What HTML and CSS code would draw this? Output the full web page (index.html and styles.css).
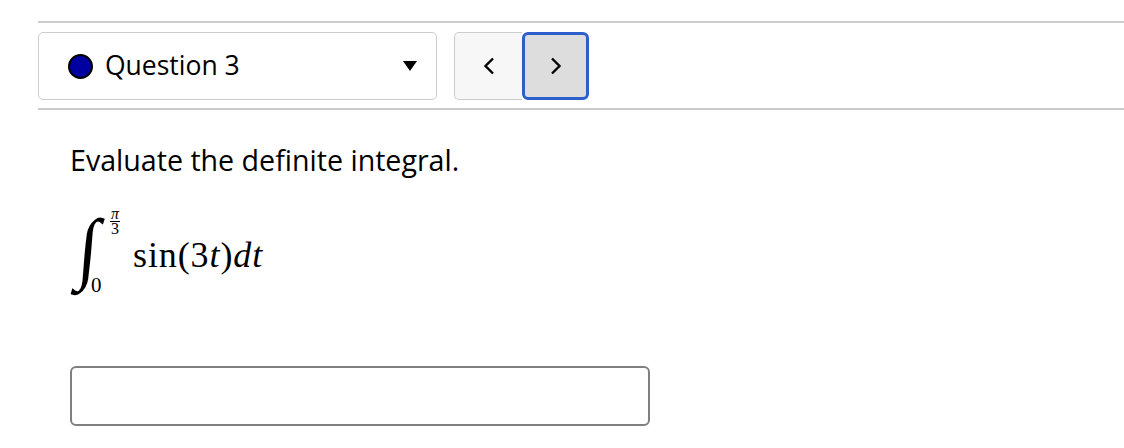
FILE: index.html
```html
<!DOCTYPE html>
<html>
<head>
<meta charset="utf-8">
<link rel="stylesheet" href="styles.css">
</head>
<body>
<div class="page">
  <div class="rule rule-top"></div>
  <div class="nav">
    <div class="select">
      <span class="dot"></span>
      <span class="select-label">Question 3</span>
      <svg class="caret" width="14" height="10" viewBox="0 0 14 10"><polygon points="0,0 14,0 7,10" fill="#000"/></svg>
    </div>
    <div class="pager">
      <button class="btn btn-prev" type="button">
        <svg width="12" height="18" viewBox="0 0 12 18"><polyline points="10,1.5 2.5,9 10,16.5" fill="none" stroke="#000" stroke-width="2.4"/></svg>
      </button>
      <button class="btn btn-next" type="button">
        <svg width="12" height="18" viewBox="0 0 12 18"><polyline points="2,1.5 9.5,9 2,16.5" fill="none" stroke="#000" stroke-width="2.4"/></svg>
      </button>
    </div>
  </div>
  <div class="rule rule-bottom"></div>
  <div class="question">
    <p class="prompt">Evaluate the definite integral.</p>
    <div class="math">
      <span class="int">∫</span>
      <span class="limits">
        <span class="upper"><span class="frac"><span class="num">π</span><span class="den">3</span></span></span>
        <span class="lower">0</span>
      </span>
      <span class="integrand">sin(3<i>t</i>)<i>dt</i></span>
    </div>
    <div class="answer"></div>
  </div>
</div>
</body>
</html>
```

FILE: styles.css
```css
html, body {
  margin: 0;
  padding: 0;
  background: #fff;
}
.page {
  padding: 21px 0 0 38px;
  font-family: "Open Sans", "Liberation Sans", sans-serif;
  font-variant-ligatures: none;
  color: #000;
}
.rule {
  height: 2px;
  background: #cccccc;
}
.nav {
  display: flex;
  align-items: flex-start;
  margin-top: 9px;
  margin-bottom: 8px;
}
.select {
  box-sizing: border-box;
  width: 399px;
  height: 68px;
  border: 1.5px solid #cccccc;
  border-radius: 5px;
  display: flex;
  align-items: center;
  padding-left: 29px;
  padding-right: 19px;
}
.dot {
  box-sizing: border-box;
  width: 25px;
  height: 25px;
  border-radius: 50%;
  background: #0000a0;
  border: 2.5px solid #000;
  flex: none;
}
.select-label {
  font-size: 26.5px;
  margin-left: 12px;
  flex: 1;
  line-height: 1;
  padding-bottom: 2px;
}
.caret {
  display: block;
}
.pager {
  display: flex;
  margin-left: 17px;
}
.btn {
  box-sizing: border-box;
  height: 68px;
  padding: 0;
  margin: 0;
  display: flex;
  align-items: center;
  justify-content: center;
}
.btn svg { display: block; }
.btn-prev {
  width: 68px;
  background: #f7f7f7;
  border: 1.5px solid #cccccc;
  border-right: none;
  border-radius: 5px 0 0 5px;
}
.btn-next {
  width: 67px;
  background: #dddddd;
  border: 3px solid #2b5fcb;
  border-radius: 6px;
}
.question {
  padding-left: 32px;
}
.prompt {
  margin: 34px 0 0 0;
  font-size: 28.6px;
  line-height: 32px;
}
.math {
  display: flex;
  align-items: flex-start;
  margin-top: 25px;
  height: 100px;
  font-family: "Liberation Serif", "DejaVu Serif", serif;
}
.int {
  display: block;
  font-size: 79px;
  line-height: 94px;
  width: 14px;
  margin-left: 6px;
  transform: translateX(2px) skewX(-5deg) scaleX(0.92);
}
.limits {
  display: flex;
  flex-direction: column;
  justify-content: space-between;
  height: 90px;
  margin-left: 0;
  margin-top: 4px;
}
.upper {
  padding-left: 20px;
}
.frac {
  display: inline-flex;
  flex-direction: column;
  align-items: center;
  font-size: 16px;
  line-height: 12px;
}
.num {
  font-style: italic;
  border-bottom: 1px solid #000;
  padding: 0 1px 1px;
}
.den {
  padding-top: 1px;
}
.lower {
  font-size: 21px;
  line-height: 20px;
  margin-left: 1px;
}
.integrand {
  font-size: 36px;
  line-height: 40px;
  margin-top: 34px;
  margin-left: 13px;
  letter-spacing: 0.9px;
}
.answer {
  box-sizing: border-box;
  width: 580px;
  height: 60px;
  border: 2px solid #808080;
  border-radius: 6px;
  margin-top: 65px;
}
```
